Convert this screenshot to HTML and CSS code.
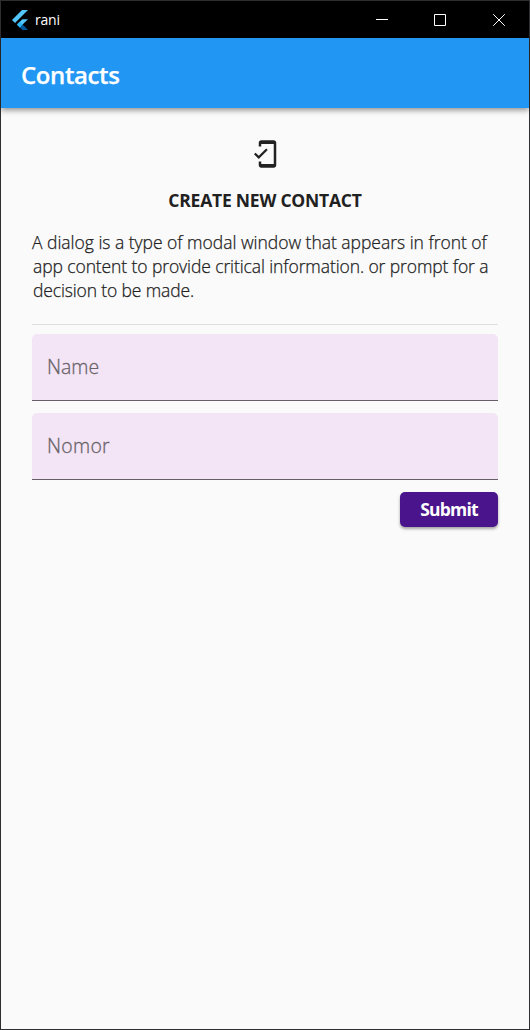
FILE: index.html
```html
<!DOCTYPE html>
<html lang="en">
<head>
<meta charset="utf-8">
<title>rani</title>
<link rel="stylesheet" href="styles.css">
</head>
<body>
<div class="window">
  <div class="titlebar">
    <svg class="logo" viewBox="0 0 16 20" width="16" height="20">
      <path fill="#54c5f8" d="M10 0h6L3 13 0 10z"/>
      <path fill="#54c5f8" d="M10.3 9.2H16L10.6 14.6 7.8 17.4 5 14.6z"/>
      <path fill="#01579b" d="M7.8 17.4l2.8-2.8L16 20h-5.6z"/>
      <path fill="#29b6f6" d="M5 14.6l2.8-2.8 2.8 2.8-2.8 2.8z"/>
    </svg>
    <span class="app-name">rani</span>
    <div class="controls">
      <svg viewBox="0 0 12 12"><path d="M1 5.5h12"/></svg>
      <svg viewBox="0 0 12 12"><path d="M.5.5h11v11H.5z"/></svg>
      <svg viewBox="0 0 12 12"><path d="M.2.2l11.6 11.6M11.8.2L.2 11.8"/></svg>
    </div>
  </div>
  <header class="appbar"><h1>Contacts</h1></header>
  <main class="content">
    <svg class="phone" viewBox="0 0 24 24"><path d="M19 1H9c-1.1 0-2 .9-2 2v3h2V4h10v16H9v-2H7v3c0 1.1.9 2 2 2h10c1.1 0 2-.9 2-2V3c0-1.1-.9-2-2-2zM7.01 13.47l-2.55-2.55-1.27 1.27L7 16l7.19-7.19-1.27-1.27z"/></svg>
    <h2>CREATE NEW CONTACT</h2>
    <p class="intro"><span class="l1">A dialog is a type of modal window that appears in front of</span> <span class="l2">app content to provide critical information. or prompt for a</span> <span class="l3">decision to be made.</span></p>
    <hr>
    <div class="field name">Name</div>
    <div class="field nomor">Nomor</div>
    <button class="submit">Submit</button>
  </main>
</div>
</body>
</html>
```
FILE: styles.css
```css
* { box-sizing: border-box; }
body { margin: 0; font-family: "Open Sans", "Noto Sans", sans-serif; color: #212121; }
.window { height: 1030px; border: 1px solid #2e2e30; background: #fafafa; display: flex; flex-direction: column; }
.titlebar { height: 37px; flex: none; background: #000; display: flex; align-items: center; padding: 0 24px 0 11px; }
.logo { display: block; }
.app-name { color: #fff; font-size: 14px; margin-left: 7px; line-height: 20px; letter-spacing: -.2px; }
.controls { margin-left: auto; display: flex; gap: 47px; }
.controls svg { width: 12px; height: 12px; fill: none; stroke: #fff; stroke-width: 1; display: block; overflow: visible; }
.appbar { height: 70px; flex: none; background: #2196f3; padding-left: 20px; display: flex; align-items: center; box-shadow: 0 2px 6px rgba(0,0,0,.45); }
h1 { margin: 4px 0 0; font-size: 24px; line-height: 30px; font-weight: 600; color: #fff; letter-spacing: -.4px; -webkit-text-stroke: .25px #fff; }
.content { display: flex; flex-direction: column; padding: 31px 31px 0; }
.phone { width: 30px; height: 30px; fill: #212121; align-self: center; }
h2 { margin: 19px 0 0; font-size: 17.5px; line-height: 24px; font-weight: 700; text-align: center; letter-spacing: -.22px; white-space: nowrap; }
.intro { margin: 18px 0 0; font-size: 17.5px; line-height: 24px; font-weight: 300; white-space: nowrap; -webkit-text-stroke: .25px #212121; }
.intro span { display: block; }
.l1 { letter-spacing: -.02px; }
.l2 { letter-spacing: -.1px; padding-left: 1px; }
.l3 { letter-spacing: -.14px; padding-left: 1px; }
hr { width: 100%; margin: 22px 0 9px; border: 0; height: 1px; background: #dedede; }
.field { height: 67px; background: #f3e5f5; border-bottom: 1px solid #665e67; border-radius: 5px 5px 0 0; padding: 19px 15px; font-size: 19.4px; line-height: 27px; font-weight: 300; color: #696269; -webkit-text-stroke: .3px #696269; margin-bottom: 12px; }
.nomor { letter-spacing: .3px; }
.submit { align-self: flex-end; width: 98px; height: 35px; border: 0; border-radius: 5px; background: #4a148c; color: #fff; font: 700 17.5px/35px "Open Sans", sans-serif; padding: 0; box-shadow: 0 2px 3px rgba(0,0,0,.35); letter-spacing: -.8px; }
```
